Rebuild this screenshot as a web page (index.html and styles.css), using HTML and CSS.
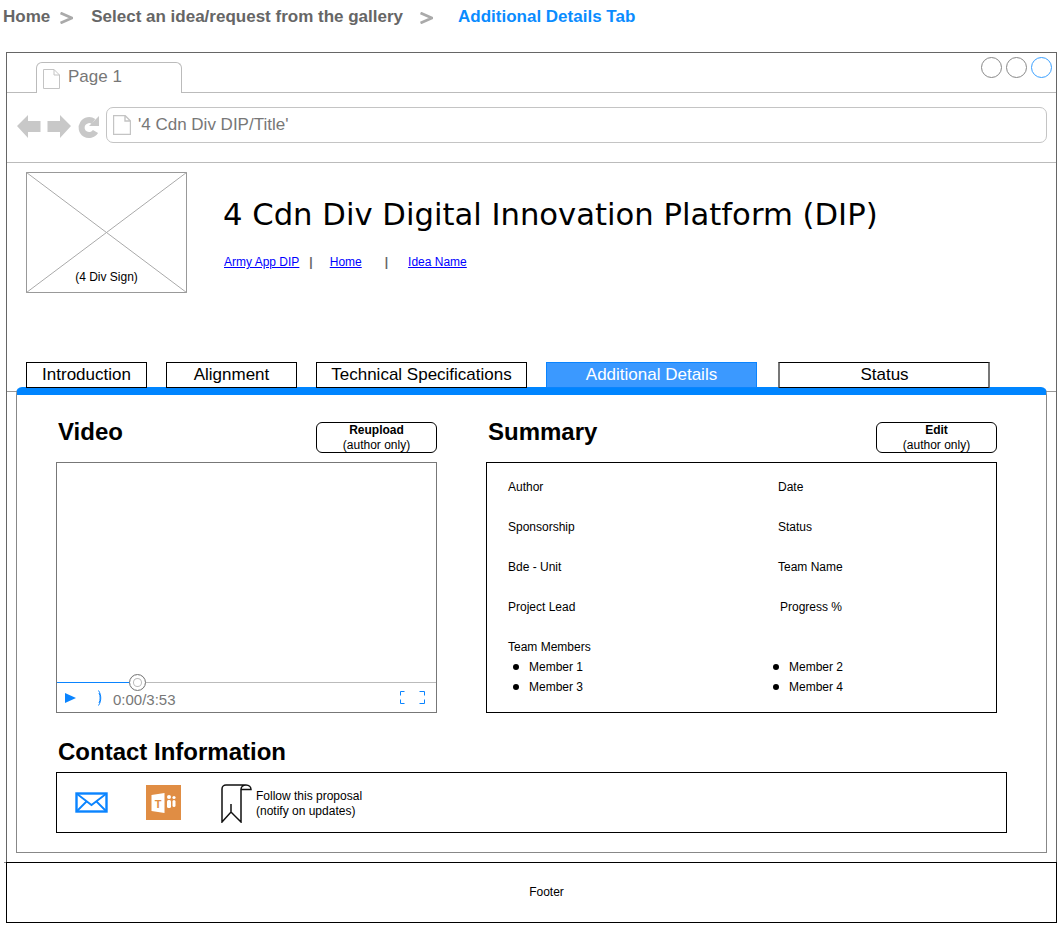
FILE: index.html
```html
<!DOCTYPE html>
<html lang="en">
<head>
    <meta charset="UTF-8">
    <title>Additional Details Tab</title>
    <link rel="stylesheet" href="styles.css">
</head>
<body>

    <div class="crumbs">
        <span class="crumb crumb-home">Home</span>
        <svg class="chevron chevron-first" width="13" height="12" viewBox="0 0 13 12"><polyline points="0.5,1 12,6 0.5,11" fill="none" stroke="#aaa" stroke-width="2.8"/></svg>
        <span class="crumb">Select an idea/request from the gallery</span>
        <svg class="chevron chevron-second" width="13" height="12" viewBox="0 0 13 12"><polyline points="0.5,1 12,6 0.5,11" fill="none" stroke="#aaa" stroke-width="2.8"/></svg>
        <span class="crumb crumb-current">Additional Details Tab</span>
    </div>

    <div class="window">
        <div class="tabstrip">
            <div class="page-tab">
                <svg width="17" height="20" viewBox="0 0 17 20"><path d="M0.5 0.5H11L16.5 6V19.5H0.5Z M11 0.5V6H16.5" fill="#fff" stroke="#c4c4c4"/></svg>
                <span>Page 1</span>
            </div>
            <div class="window-buttons">
                <span class="circle"></span>
                <span class="circle"></span>
                <span class="circle circle-on"></span>
            </div>
        </div>

        <div class="toolbar">
            <svg class="nav-icons" width="84" height="26" viewBox="0 0 84 26">
                <path d="M0 13L11 2V8H23.500V19H11V25Z" fill="#c8c8c8"/>
                <path d="M54 13L43 2V8H30.500V19H43V25Z" fill="#c8c8c8"/>
                <path d="M78.500 18.500A7.500 7.500 0 1 1 76.500 8.500" fill="none" stroke="#c8c8c8" stroke-width="6"/>
                <path d="M82 3V13H72Z" fill="#c8c8c8"/>
            </svg>
            <div class="address">
                <svg width="18" height="20" viewBox="0 0 18 20"><path d="M0.5 0.5H12L17.5 6V19.5H0.5Z M12 0.5V6H17.5" fill="#fff" stroke="#c4c4c4" stroke-width="1.4"/></svg>
                <span>'4 Cdn Div DIP/Title'</span>
            </div>
        </div>

        <div class="header">
            <div class="logo">
                <svg width="161" height="121" viewBox="0 0 161 121"><rect x="0.5" y="0.5" width="160" height="120" fill="#fff" stroke="#999"/><path d="M0.5 0.5L160.5 120.5M160.5 0.5L0.5 120.5" stroke="#aaa"/></svg>
                <span class="logo-label">(4 Div Sign)</span>
            </div>
            <div class="header-text">
                <h1>4 Cdn Div Digital Innovation Platform (DIP)</h1>
                <div class="links">
                    <a href="#">Army App DIP</a>
                    <span class="pipe pipe-first">|</span>
                    <a href="#">Home</a>
                    <span class="pipe pipe-second">|</span>
                    <a href="#">Idea Name</a>
                </div>
            </div>
        </div>

        <div class="tabs">
            <div class="tab tab-intro">Introduction</div>
            <div class="tab tab-align">Alignment</div>
            <div class="tab tab-tech">Technical Specifications</div>
            <div class="tab tab-tech tab-active">Additional Details</div>
            <div class="tab tab-status">Status</div>
        </div>

        <div class="panel">
            <div class="columns">
                <div class="col-video">
                    <div class="col-head">
                        <h2>Video</h2>
                        <div class="small-btn"><b>Reupload</b><br>(author only)</div>
                    </div>
                    <div class="player">
                        <div class="screen"></div>
                        <div class="seek">
                            <span class="seek-done"></span>
                            <span class="knob"></span>
                        </div>
                        <div class="controls">
                            <svg width="11" height="10" viewBox="0 0 11 10"><path d="M0 0L11 5L0 10Z" fill="#0a84ff"/></svg>
                            <svg class="speaker" width="4" height="16" viewBox="0 0 4 16"><path d="M0.500 0.500C3.500 5 3.500 11 0.500 15.500M1 3C2.500 6 2.500 10 1 13" fill="none" stroke="#0a84ff"/></svg>
                            <span class="time">0:00/3:53</span>
                            <svg class="fullscreen" width="26" height="13" viewBox="0 0 26 13"><path d="M5.500 0.500H1.500V4.500M1.500 8.500V12.500H5.500M20.500 0.500H25.500V4.500M25.500 8.500V12.500H20.500" fill="none" stroke="#0a84ff"/></svg>
                        </div>
                    </div>
                </div>

                <div class="col-summary">
                    <div class="col-head">
                        <h2>Summary</h2>
                        <div class="small-btn"><b>Edit</b><br>(author only)</div>
                    </div>
                    <div class="summary">
                        <div class="field">Author</div><div class="field">Date</div>
                        <div class="field">Sponsorship</div><div class="field">Status</div>
                        <div class="field">Bde - Unit</div><div class="field">Team Name</div>
                        <div class="field">Project Lead</div><div class="field field-nudge">Progress %</div>
                        <div class="field field-short">Team Members</div><div class="field field-short"></div>
                        <div class="member">Member 1</div><div class="member member-right">Member 2</div>
                        <div class="member">Member 3</div><div class="member member-right">Member 4</div>
                    </div>
                </div>
            </div>

            <h2 class="contact-title">Contact Information</h2>
            <div class="contact">
                <svg class="mail" width="33" height="21" viewBox="0 0 33 21"><rect x="1.500" y="1.500" width="30" height="18" fill="#fff" stroke="#0a84ff" stroke-width="2.400"/><path d="M1.500 1.500L16.500 13L31.500 1.500M1.500 19.500L12 9M31.500 19.500L21 9" fill="none" stroke="#0a84ff" stroke-width="1.800"/></svg>
                <div class="teams">
                    <svg width="35" height="35" viewBox="0 0 35 35">
                        <rect width="35" height="35" fill="#e08d44"/>
                        <path d="M5.500 10L18.500 8V28L5.500 26Z" fill="#fff"/>
                        <text x="12" y="22.500" text-anchor="middle" class="teams-t">T</text>
                        <circle cx="23" cy="12" r="2" fill="#fff"/>
                        <circle cx="28" cy="12.500" r="1.600" fill="#fff"/>
                        <rect x="21" y="15" width="4" height="8" rx="1.500" fill="#fff"/>
                        <rect x="26.500" y="15" width="3" height="7" rx="1.500" fill="#fff"/>
                    </svg>
                </div>
                <svg class="ribbon" width="31" height="39" viewBox="0 0 31 39"><path d="M1 38V5C1 2.500 3 1 5 1H25C28 1 30 3 30 5.500H20V38L10 28L1 38Z M20 5.500C20 3 22 1 25 1 M10 20V28" fill="#fff" stroke="#111" stroke-width="1.500"/></svg>
                <div class="follow">Follow this proposal<br>(notify on updates)</div>
            </div>
        </div>

        <div class="footer">Footer</div>
    </div>

</body>
</html>
```

FILE: styles.css
```css
* {
    box-sizing: border-box;
}

body {
    margin: 0;
    background-color: #fff;
    font-family: "Liberation Sans", Arial, sans-serif;
    color: #000;
}

/* breadcrumb */
.crumbs {
    height: 52px;
    padding: 8px 0 0 3px;
    display: flex;
    align-items: flex-start;
    font-size: 17px;
    font-weight: bold;
    line-height: 18px;
}

.crumb {
    color: #666;
}

.crumb-current {
    color: #0a8cff;
}

.chevron {
    margin-top: 4px;
}

.chevron-first {
    margin-left: 10px;
    margin-right: 18px;
}

.chevron-second {
    margin-left: 17px;
    margin-right: 25px;
}

/* browser frame */
.window {
    width: 1051px;
    height: 871px;
    margin-left: 6px;
    border: 1px solid #666;
    border-bottom: 0;
    display: flex;
    flex-direction: column;
}

.tabstrip {
    height: 40px;
    flex: none;
    border-bottom: 1px solid #bbb;
    padding: 0 4px 0 29px;
    display: flex;
    justify-content: space-between;
}

.page-tab {
    width: 146px;
    height: 31px;
    margin-top: 9px;
    border: 1px solid #bbb;
    border-bottom: 0;
    border-radius: 6px 6px 0 0;
    background-color: #fff;
    padding: 5px 0 0 6px;
    display: flex;
    align-items: flex-start;
    gap: 8px;
    font-size: 17px;
    line-height: 18px;
    color: #777;
}

.page-tab svg {
    margin-top: 1px;
}

.window-buttons {
    display: flex;
    gap: 4px;
    margin-top: 4px;
}

.circle {
    width: 21px;
    height: 21px;
    border: 1px solid #888;
    border-radius: 50%;
}

.circle-on {
    border-color: #3aa0ff;
}

.toolbar {
    height: 70px;
    flex: none;
    border-bottom: 1px solid #bbb;
    padding: 14px 9px 0 10px;
    display: flex;
    align-items: flex-start;
}

.nav-icons {
    margin-top: 6px;
}

.address {
    width: 941px;
    height: 36px;
    margin-left: 5px;
    border: 1px solid #c4c4c4;
    border-radius: 7px;
    padding-left: 6px;
    display: flex;
    align-items: center;
    gap: 7px;
    font-size: 17px;
    color: #777;
}

/* page header */
.header {
    height: 199px;
    flex: none;
    padding: 9px 0 0 19px;
    display: flex;
}

.logo {
    position: relative;
    width: 161px;
    height: 121px;
}

.logo svg {
    display: block;
}

.logo-label {
    position: absolute;
    left: 0;
    right: 0;
    bottom: 9px;
    text-align: center;
    font-size: 12px;
    line-height: 14px;
}

.header-text {
    margin-left: 36px;
}

h1 {
    margin: 23px 0 0;
    font-family: "DejaVu Sans", Verdana, sans-serif;
    font-size: 30.660px;
    font-weight: normal;
    line-height: 40px;
}

.links {
    margin-top: 20px;
    margin-left: 1px;
    display: flex;
    font-size: 12px;
    line-height: 14px;
}

.links a {
    color: #00f;
}

.pipe {
    color: #666;
    font-weight: bold;
}

.pipe-first {
    margin: 0 17px 0 10px;
}

.pipe-second {
    margin: 0 20px 0 23px;
}

/* tab row */
.tabs {
    height: 30px;
    flex: none;
    border-bottom: 1px solid #999;
    padding-left: 19px;
    display: flex;
    gap: 19px;
    align-items: flex-start;
}

.tab {
    position: relative;
    z-index: 1;
    height: 26px;
    border: 1px solid #000;
    text-align: center;
    font-size: 17px;
    line-height: 23px;
    background-color: #fff;
}

.tab-intro {
    width: 121px;
}

.tab-align {
    width: 131px;
}

.tab-tech {
    width: 211px;
}

.tab-active {
    border-color: #0a84ff;
    background-color: #3b99ff;
    color: #fff;
}

.tab-status {
    width: 212px;
    margin-left: 2px;
    padding-left: 1px;
    border-left: 2px solid #777;
    border-right: 2px solid #777;
}

.panel {
    position: relative;
    height: 466px;
    flex: none;
    margin: -5px 9px 0;
    border: 1px solid #888;
    border-top: 8px solid #0085ff;
    border-radius: 6px 6px 0 0;
    background-color: #fff;
    padding: 27px 0 0 39px;
}

.columns {
    display: flex;
    gap: 49px;
}

.col-video {
    width: 381px;
}

.col-summary {
    width: 511px;
}

.col-head {
    height: 31px;
    margin-bottom: 9px;
    display: flex;
    justify-content: space-between;
    align-items: flex-start;
}

h2 {
    margin: 0 0 0 2px;
    font-size: 24px;
    font-weight: bold;
    line-height: 28px;
}

.col-head h2 {
    line-height: 20px;
}

.small-btn {
    width: 121px;
    height: 31px;
    border: 1px solid #000;
    border-radius: 6px;
    text-align: center;
    font-size: 12px;
    line-height: 15px;
}

/* video player */
.player {
    height: 251px;
    border: 1px solid #777;
    display: flex;
    flex-direction: column;
}

.screen {
    flex: 1;
}

.seek {
    position: relative;
    height: 1px;
    flex: none;
    background-color: #bbb;
}

.seek-done {
    display: block;
    width: 73px;
    height: 1px;
    background-color: #0a84ff;
}

.knob {
    position: absolute;
    left: 72px;
    top: -8px;
    width: 17px;
    height: 17px;
    border: 1px solid #777;
    border-radius: 50%;
    background-color: #fff;
    box-shadow: inset 0 0 0 3px #fff, inset 0 0 0 4px #bbb;
}

.controls {
    height: 29px;
    flex: none;
    padding: 0 11px 0 8px;
    display: flex;
    align-items: center;
}

.speaker {
    margin-left: 22px;
}

.time {
    margin-left: 11px;
    margin-top: 4px;
    font-size: 15px;
    color: #777;
}

.fullscreen {
    margin-left: auto;
}

/* summary box */
.summary {
    height: 251px;
    border: 1px solid #000;
    padding: 14px 0 0 21px;
    display: grid;
    grid-template-columns: 270px 1fr;
    grid-auto-rows: 40px;
    font-size: 12px;
    line-height: 20px;
}

.field-short,
.member {
    height: 20px;
}

.field-nudge {
    padding-left: 2px;
}

.member {
    display: flex;
    align-items: center;
    padding-left: 5px;
    gap: 10px;
    margin-top: -20px;
}

.member:nth-child(n+13) {
    margin-top: -40px;
}

.member-right {
    padding-left: 0;
    margin-left: -5px;
}

.member::before {
    content: "";
    width: 6px;
    height: 6px;
    border-radius: 50%;
    background-color: #000;
}

/* contact */
.contact-title {
    margin-top: 25px;
}

.contact {
    width: 951px;
    height: 61px;
    margin-top: 6px;
    border: 1px solid #000;
    padding-left: 18px;
    display: flex;
    align-items: center;
}

.teams {
    margin-left: 38px;
    height: 35px;
}

.teams svg {
    display: block;
}

.teams-t {
    font-family: "Liberation Sans", Arial, sans-serif;
    font-size: 11px;
    font-weight: bold;
    fill: #e08d44;
}

.ribbon {
    margin-left: 40px;
    margin-top: 2px;
}

.follow {
    margin-left: 4px;
    margin-top: 3px;
    font-size: 12px;
    line-height: 15px;
}

.footer {
    position: relative;
    height: 61px;
    flex: none;
    margin: 9px -1px 0;
    border: 1px solid #000;
    padding-left: 30px;
    text-align: center;
    font-size: 12px;
    line-height: 58px;
}

.footer::before {
    content: "";
    position: absolute;
    left: -3px;
    top: -1px;
    width: 2px;
    height: 1px;
    background-color: #888;
}
```
